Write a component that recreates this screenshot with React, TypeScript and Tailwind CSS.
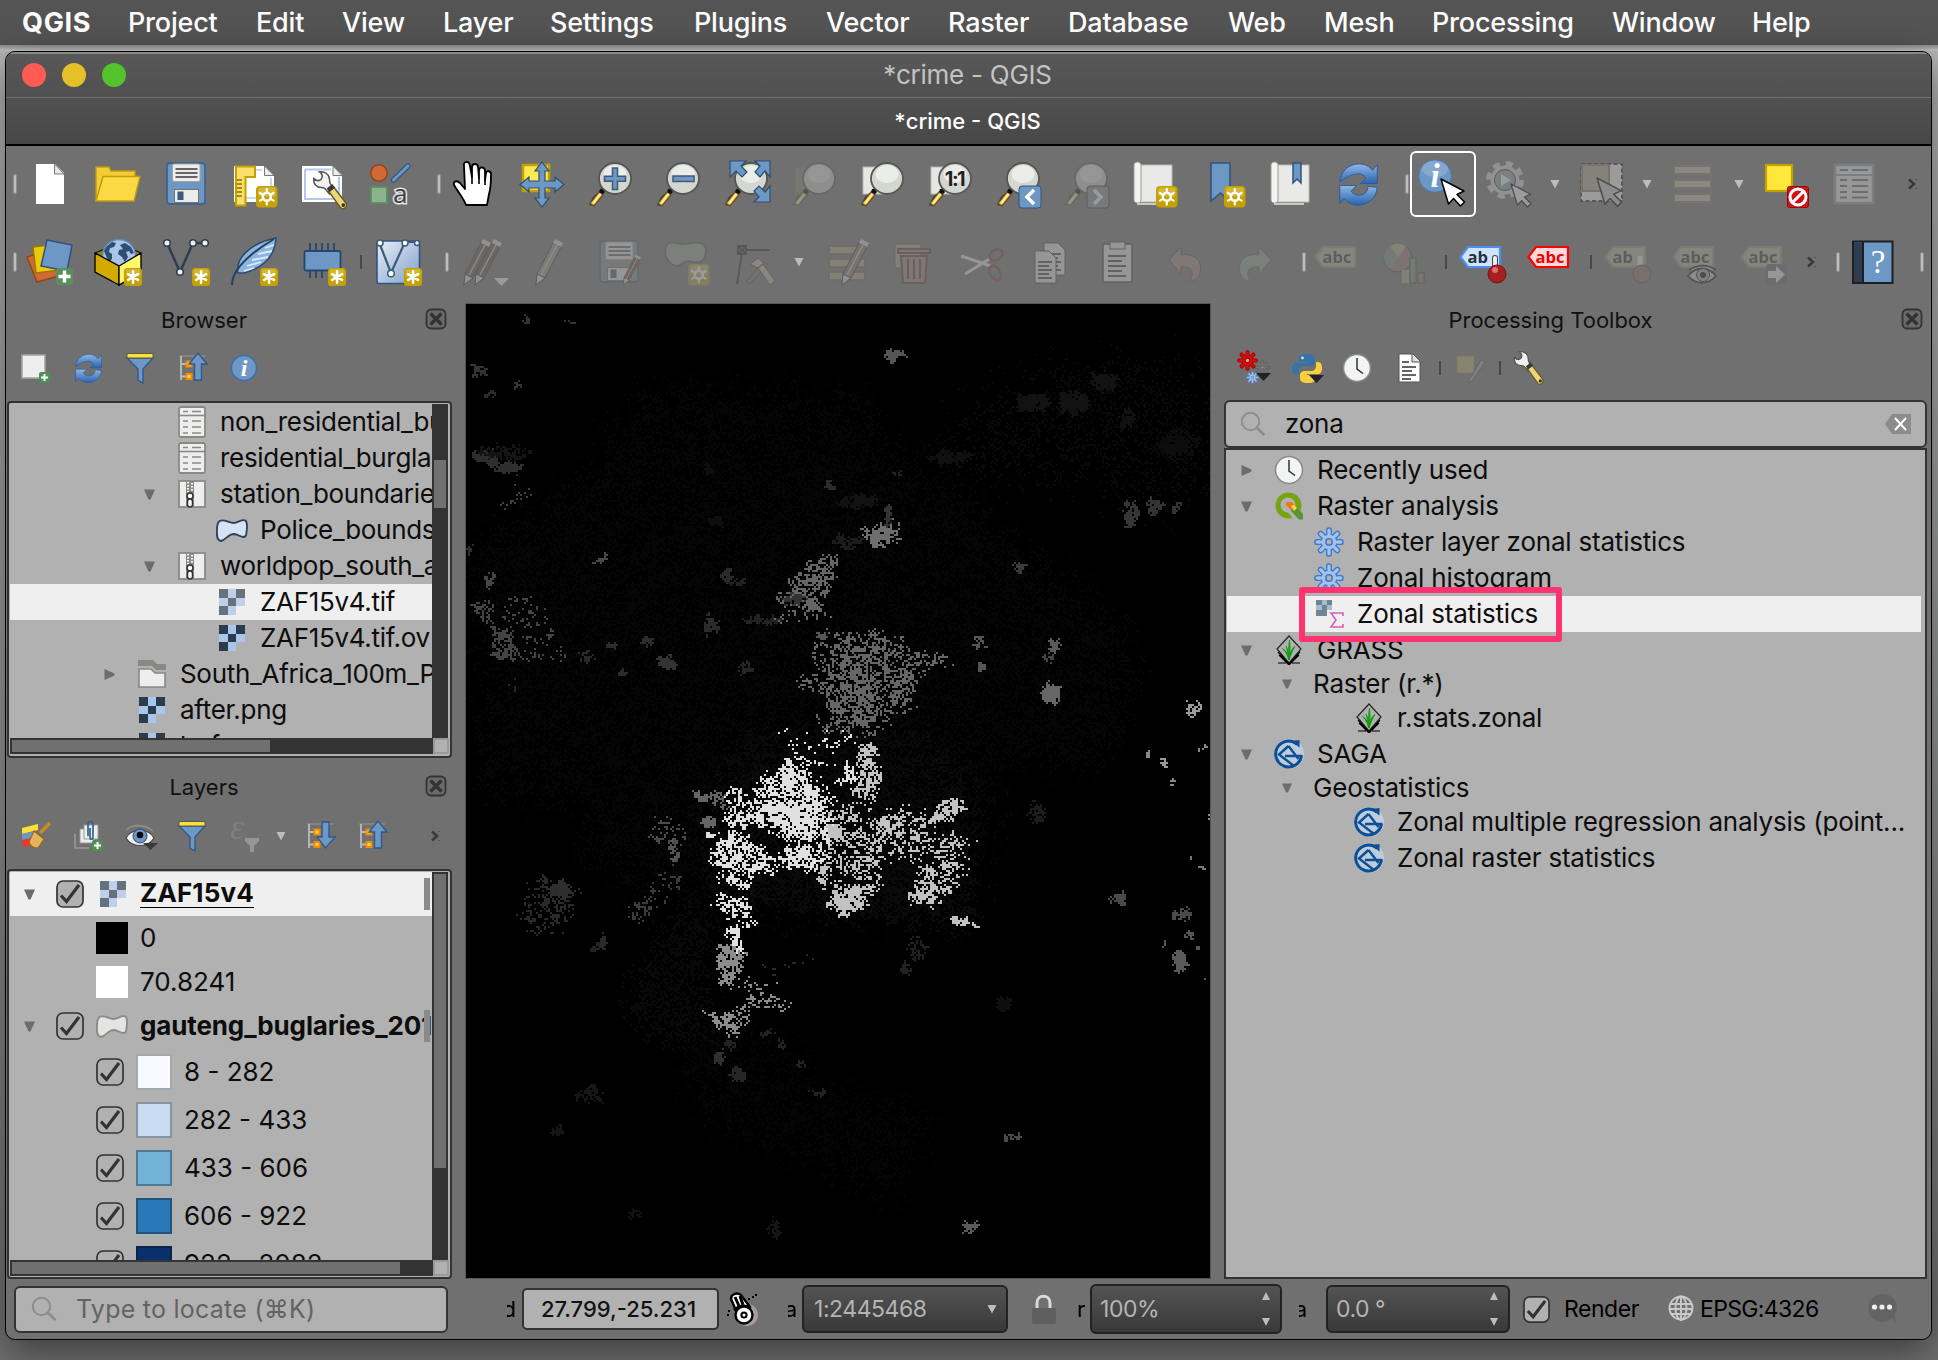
import React from "react";

/* ------------------------------------------------------------------ */
/* Map canvas                                                          */
/* ------------------------------------------------------------------ */

type Pt = [number, number];
type Region = { shade: string; density: number; pts: Pt[]; jitter?: number };

const hash = (x: number, y: number, s: number) => {
  let h = (Math.imul(x, 374761393) + Math.imul(y, 668265263) + Math.imul(s, 1274126177)) | 0;
  h = Math.imul(h ^ (h >>> 13), 1274126177);
  h = Math.imul(h ^ (h >>> 15), 2246822519);
  h = h ^ (h >>> 16);
  return (h >>> 0) / 4294967296;
};

const smooth = (x: number, y: number, sx: number, sy: number, s: number) => {
  const gx = Math.floor(x / sx);
  const gy = Math.floor(y / sy);
  const fx = x / sx - gx;
  const fy = y / sy - gy;
  const top = hash(gx, gy, s) * (1 - fx) + hash(gx + 1, gy, s) * fx;
  const bot = hash(gx, gy + 1, s) * (1 - fx) + hash(gx + 1, gy + 1, s) * fx;
  return top * (1 - fy) + bot * fy;
};

const inside = (x: number, y: number, p: Pt[]) => {
  let r = false;
  for (let i = 0, j = p.length - 1; i < p.length; j = i++) {
    if (p[i][1] > y !== p[j][1] > y && x < ((p[j][0] - p[i][0]) * (y - p[i][1])) / (p[j][1] - p[i][1]) + p[i][0]) r = !r;
  }
  return r;
};

const near = (pts: Pt[]): Pt[] => pts.map(([x, y]) => [x / 3 + 214, y / 3 + 416]);
const far = (pts: Pt[]): Pt[] => pts.map(([x, y]) => [x / 2.063 - 6, y / 1.6 - 4]);

const fill = (r: Region, seed: number) => {
  const j = r.jitter ?? 9;
  const xs = r.pts.map((p) => p[0]);
  const ys = r.pts.map((p) => p[1]);
  const x0 = Math.floor((Math.min(...xs) - j) / 2);
  const x1 = Math.ceil((Math.max(...xs) + j) / 2);
  const y0 = Math.floor((Math.min(...ys) - j) / 2);
  const y1 = Math.ceil((Math.max(...ys) + j) / 2);
  let d = "";
  for (let y = y0; y <= y1; y++) {
    for (let x = x0; x <= x1; x++) {
      const jx = x * 2 + (smooth(x, y, 3, 3, 5) - 0.5) * j * 1.4 + (hash(x, y, 6) - 0.5) * j * 0.9;
      const jy = y * 2 + (smooth(x, y, 3, 3, 9) - 0.5) * j * 1.4 + (hash(x, y, 8) - 0.5) * j * 0.9;
      if (!inside(jx, jy, r.pts)) continue;
      const n = hash(x, y, seed) * 0.46 + smooth(x, y, 2.2, 1.1, seed + 3) * 0.34 + smooth(x, y, 5, 4, 77) * 0.2;
      if (n < 0.5 + (r.density - 0.5) * 0.58) d += `M${x * 2} ${y * 2}h2v2h-2z`;
    }
  }
  return d;
};

const FAINT: Region[] = [
  { shade: "#050505", density: 0.5, jitter: 30, pts: far([[370, 145], [850, 160], [860, 230], [1050, 320], [1380, 540], [1380, 660], [1330, 740], [1110, 740], [1060, 1000], [500, 980], [270, 900], [270, 800], [40, 780], [50, 620], [20, 400], [270, 280]]) },
  { shade: "#080808", density: 0.36, jitter: 50, pts: far([[970, 240], [1140, 150], [1360, 100], [1480, 110], [1530, 230], [1540, 320], [1340, 280], [1160, 260], [1020, 260]]) },
  { shade: "#080808", density: 0.52, jitter: 20, pts: far([[350, 1095], [420, 1000], [500, 960], [520, 1180], [440, 1190], [350, 1160]]) },
  { shade: "#040404", density: 0.5, jitter: 30, pts: far([[440, 1190], [620, 1160], [740, 1260], [980, 1300], [880, 1430], [740, 1380], [530, 1320]]) },
  { shade: "#0a0a0a", density: 0.42, jitter: 20, pts: far([[600, 690], [900, 680], [1050, 760], [1060, 1000], [860, 990], [520, 960], [480, 860], [540, 740]]) },
];

const MAIN: Region[] = [
  { shade: "#e0e0e0", density: 0.52, pts: near([[320, 115], [385, 150], [440, 200], [460, 250], [450, 355], [370, 360], [290, 350], [240, 320], [180, 318], [115, 310], [145, 205], [180, 205], [200, 250], [250, 165]]) },
  { shade: "#e0e0e0", density: 0.6, pts: near([[300, 150], [350, 150], [410, 210], [410, 320], [440, 330], [440, 355], [340, 345], [290, 300], [180, 310], [180, 290], [240, 260], [270, 200]]) },
  { shade: "#e0e0e0", density: 0.6, pts: near([[150, 330], [240, 370], [285, 405], [270, 460], [200, 465], [95, 435], [90, 400], [120, 360]]) },
  { shade: "#e0e0e0", density: 0.56, pts: near([[300, 375], [440, 378], [440, 400], [400, 470], [330, 430], [290, 430]]) },
  { shade: "#e0e0e0", density: 0.66, pts: near([[120, 465], [200, 470], [205, 512], [180, 500], [125, 490]]) },
  { shade: "#e0e0e0", density: 0.46, pts: near([[95, 530], [200, 535], [215, 600], [190, 615], [140, 592]]) },
  { shade: "#e0e0e0", density: 0.76, pts: near([[138, 618], [175, 618], [190, 700], [150, 672]]), jitter: 5 },
  { shade: "#e0e0e0", density: 0.18, pts: near([[290, 40], [530, 30], [530, 80], [440, 150], [380, 150], [300, 120]]) },
  { shade: "#e0e0e0", density: 1, pts: near([[75, 335], [115, 340], [110, 350], [80, 348]]), jitter: 2 },
  { shade: "#8c8c8c", density: 0.72, pts: near([[108, 675], [150, 675], [200, 700], [185, 740], [140, 800], [110, 790]]), jitter: 6 },
  { shade: "#8c8c8c", density: 0.64, pts: near([[72, 868], [110, 880], [190, 855], [200, 900], [150, 945], [100, 910]]), jitter: 6 },
  { shade: "#8c8c8c", density: 0.26, pts: near([[180, 780], [260, 780], [330, 860], [300, 880], [190, 860]]) },
  { shade: "#c2c2c2", density: 0.64, pts: near([[535, 75], [580, 75], [590, 160], [602, 215], [570, 255], [525, 230], [540, 150]]), jitter: 7 },
  { shade: "#e0e0e0", density: 0.56, pts: near([[500, 108], [535, 120], [530, 190], [480, 190]]) },
  { shade: "#c2c2c2", density: 0.42, pts: near([[450, 260], [540, 265], [600, 330], [620, 400], [560, 480], [480, 440], [440, 420], [440, 330]]) },
  { shade: "#c2c2c2", density: 1, pts: near([[445, 310], [480, 310], [475, 345], [440, 345]]), jitter: 3 },
  { shade: "#c2c2c2", density: 0.56, pts: near([[600, 288], [690, 278], [690, 308], [640, 345], [600, 330]]) },
  { shade: "#c2c2c2", density: 0.68, pts: near([[748, 290], [795, 230], [852, 235], [850, 275], [760, 312]]), jitter: 6 },
  { shade: "#c2c2c2", density: 0.3, pts: near([[600, 255], [720, 260], [760, 320], [860, 350], [880, 410], [830, 490], [740, 480], [660, 410], [560, 400]]) },
  { shade: "#c2c2c2", density: 0.74, pts: near([[448, 490], [570, 500], [560, 550], [490, 592], [448, 560]]), jitter: 7 },
  { shade: "#c2c2c2", density: 0.7, pts: near([[438, 420], [450, 445], [430, 512], [402, 490]]), jitter: 5 },
  { shade: "#c2c2c2", density: 0.3, pts: near([[520, 440], [600, 430], [605, 490], [580, 520], [520, 500]]) },
  { shade: "#c2c2c2", density: 0.64, pts: near([[690, 510], [740, 440], [770, 440], [772, 550], [740, 564], [692, 540]]), jitter: 7 },
  { shade: "#c2c2c2", density: 0.34, pts: near([[770, 440], [830, 400], [850, 440], [800, 520], [770, 520]]) },
  { shade: "#646464", density: 0.62, pts: near([[28, 205], [130, 220], [135, 262], [40, 240]]), jitter: 5 },
  { shade: "#646464", density: 0.9, pts: near([[58, 290], [102, 293], [102, 320], [62, 315]]), jitter: 3 },
  { shade: "#6e6e6e", density: 0.7, pts: far([[828, 362], [870, 360], [895, 348], [902, 390], [860, 400], [830, 382]]), jitter: 6 },
  { shade: "#666666", density: 0.52, pts: far([[700, 425], [775, 402], [775, 440], [750, 480], [755, 505], [710, 490], [650, 478], [690, 450]]) },
  { shade: "#666666", density: 0.4, pts: far([[645, 520], [650, 500], [700, 485], [755, 500], [750, 512], [680, 505]]) },
  { shade: "#666666", density: 0.48, pts: far([[770, 535], [870, 532], [890, 560], [1000, 570], [1003, 585], [930, 590], [930, 650], [870, 655], [840, 680], [760, 685], [770, 640], [745, 612], [690, 622], [692, 605], [770, 585]]) },
  { shade: "#666666", density: 0.18, pts: far([[730, 530], [930, 535], [960, 610], [860, 690], [740, 690]]) },
  { shade: "#444444", density: 0.5, pts: far([[15, 485], [60, 480], [65, 515], [110, 530], [110, 575], [70, 570], [60, 520]]), jitter: 5 },
  { shade: "#444444", density: 0.26, pts: far([[90, 480], [160, 480], [210, 570], [110, 570]]) },
  { shade: "#2e2e2e", density: 0.85, pts: far([[22, 250], [60, 235], [80, 262], [130, 258], [120, 275], [80, 272]]), jitter: 4 },
  { shade: "#404040", density: 0.38, pts: far([[65, 325], [130, 298], [130, 315], [70, 335]]) },
  { shade: "#4a4a4a", density: 0.34, pts: far([[400, 830], [450, 825], [460, 850], [445, 900], [435, 870], [400, 865]]) },
  { shade: "#3c3c3c", density: 0.34, pts: far([[340, 1005], [370, 955], [450, 900], [460, 930], [400, 975]]) },
  { shade: "#2a2a2a", density: 0.38, pts: far([[120, 960], [160, 925], [235, 935], [235, 960], [210, 1010], [140, 1012]]) },
  { shade: "#2a2a2a", density: 0.26, pts: far([[620, 1070], [720, 1048], [720, 1060], [640, 1080]]) },
];

/* centre x, centre y, width, height, shade, density */
const SPOTS: [number, number, number, number, string, number][] = [
  [888, 88, 30, 18, "#555555", 1], [908, 87, 28, 8, "#555555", 1.1], [132, 32, 12, 10, "#333333", 0.6], [224, 37, 10, 5, "#333333", 0.8], [36, 113, 26, 20, "#333333", 0.45],
  [120, 131, 8, 10, "#333333", 0.8], [60, 151, 20, 8, "#2c2c2c", 0.85], [288, 412, 28, 12, "#484848", 0.85], [58, 450, 14, 28, "#444444", 0.7],
  [550, 440, 20, 24, "#2a2a2a", 0.85], [570, 450, 34, 8, "#222222", 0.7], [515, 518, 36, 26, "#2c2c2c", 0.75], [424, 578, 28, 28, "#333333", 0.9],
  [313, 548, 16, 12, "#2c2c2c", 0.8], [382, 546, 20, 10, "#2c2c2c", 0.8], [336, 596, 18, 10, "#2c2c2c", 0.8], [762, 297, 24, 14, "#2c2c2c", 0.9],
  [880, 340, 18, 40, "#333333", 0.6], [690, 478, 50, 14, "#333333", 0.7], [620, 510, 70, 12, "#222222", 0.8], [1153, 424, 24, 18, "#3a3a3a", 0.95],
  [1383, 340, 26, 44, "#363636", 0.75], [1430, 330, 30, 20, "#333333", 0.6], [1476, 332, 14, 18, "#333333", 0.8], [1068, 548, 26, 26, "#555555", 0.5],
  [1073, 587, 16, 12, "#555555", 0.85], [1226, 552, 24, 26, "#5a5a5a", 0.8], [1220, 628, 38, 28, "#666666", 0.85], [1510, 655, 32, 26, "#9a9a9a", 0.5],
  [1450, 740, 12, 14, "#9a9a9a", 1], [1467, 770, 18, 5, "#888888", 0.9], [1413, 727, 5, 7, "#888888", 1], [1532, 712, 5, 5, "#888888", 1],
  [1545, 825, 6, 8, "#888888", 1], [1510, 890, 6, 5, "#777777", 1], [1523, 904, 8, 5, "#777777", 1], [1360, 957, 30, 22, "#4a4a4a", 0.7],
  [1490, 983, 38, 14, "#4a4a4a", 0.7], [1506, 1014, 16, 11, "#555555", 1], [1483, 1058, 26, 34, "#5a5a5a", 0.85], [1455, 1029, 5, 5, "#555555", 1],
  [1520, 1038, 12, 5, "#555555", 0.8], [1536, 1083, 6, 3, "#555555", 1], [1030, 990, 30, 12, "#c2c2c2", 1.2], [1058, 998, 12, 8, "#c2c2c2", 1.2],
  [1126, 1341, 14, 9, "#4a4a4a", 1], [1141, 1336, 12, 8, "#4a4a4a", 1], [1047, 1484, 14, 16, "#5a5a5a", 1.1], [1058, 1476, 16, 12, "#5a5a5a", 1.1],
  [205, 942, 50, 28, "#2e2e2e", 0.7], [290, 1024, 16, 20, "#2a2a2a", 0.85],
  [276, 1035, 20, 10, "#222222", 0.7], [535, 1212, 28, 22, "#303030", 0.95], [554, 1190, 18, 12, "#222222", 0.9], [570, 1238, 34, 16, "#262626", 0.8],
  [628, 1172, 26, 14, "#222222", 0.5], [660, 1190, 16, 6, "#222222", 0.8], [265, 1272, 56, 26, "#161616", 0.6], [740, 1266, 26, 8, "#222222", 0.7],
  [702, 1224, 16, 5, "#222222", 0.8], [202, 1327, 24, 12, "#161616", 0.6], [650, 1486, 18, 28, "#141414", 0.9], [356, 1461, 20, 12, "#111111", 0.6],
  [1188, 818, 28, 36, "#1c1c1c", 0.5], [940, 1036, 40, 36, "#202020", 0.3], [915, 1066, 16, 18, "#222222", 0.6], [1120, 1126, 36, 20, "#0e0e0e", 0.8],
  [1180, 165, 70, 28, "#121212", 0.8], [1268, 162, 60, 40, "#121212", 0.8], [1328, 128, 54, 28, "#121212", 0.7], [1376, 188, 34, 30, "#111111", 0.7],
  [1010, 250, 90, 18, "#101010", 0.8], [1480, 230, 80, 50, "#0d0d0d", 0.5], [820, 320, 80, 22, "#121212", 0.8], [525, 352, 26, 18, "#0e0e0e", 0.8],
  [510, 270, 20, 14, "#0e0e0e", 0.8], [90, 242, 120, 20, "#141414", 0.4], [15, 400, 8, 18, "#2e2e2e", 1], [102, 612, 26, 14, "#262626", 0.4],
  [588, 588, 30, 14, "#262626", 0.5], [800, 385, 60, 18, "#1c1c1c", 0.6], [440, 880, 14, 40, "#555555", 0.5], [744, 540, 26, 18, "#555555", 0.6],
  [900, 278, 24, 8, "#222222", 0.5], [262, 570, 30, 14, "#2a2a2a", 0.3], [1210, 570, 14, 18, "#444444", 0.4],
];

const ellipse = (cx: number, cy: number, w: number, h: number): Pt[] =>
  Array.from({ length: 12 }, (_, i) => [cx + (Math.cos((i * Math.PI) / 6) * w) / 2, cy + (Math.sin((i * Math.PI) / 6) * h) / 2] as Pt);

const PATHS = [
  ...FAINT,
  ...MAIN,
  ...SPOTS.map(([x, y, w, h, shade, density]) => ({ shade, density: density + 0.15, jitter: 5, pts: far(ellipse(x, y, w + 3, h + 2)) })),
].map((r, i) => ({ shade: r.shade, d: fill(r, i + 11) }));

const MapCanvas = () => (
  <svg width="744" height="974" viewBox="0 0 744 974" shapeRendering="crispEdges" className="block bg-black">
    {PATHS.map((p, i) => (
      <path key={i} d={p.d} fill={p.shade} />
    ))}
  </svg>
);

/* ------------------------------------------------------------------ */
/* Toolbar icons (48 × 48 box)                                         */
/* ------------------------------------------------------------------ */

type Kids = { children?: React.ReactNode };

const I = ({ children, dim = false }: Kids & { dim?: boolean }) => (
  <svg width="48" height="48" viewBox="0 0 48 48" className={dim ? "shrink-0 opacity-[0.3] saturate-[0.6] overflow-visible" : "shrink-0 overflow-visible"}>
    {children}
  </svg>
);

const Star = ({ x = 26, y = 26, gear = false }: { x?: number; y?: number; gear?: boolean }) => (
  <g transform={`translate(${x},${y})`}>
    <rect width="21.5" height="21.5" rx="4" fill="#c4a000" />
    <rect x="2" y="1.5" width="17.5" height="9" rx="2" fill="#d9c04d" opacity=".7" />
    {gear && <circle cx="10.8" cy="10.8" r="4" fill="none" stroke="#fff" strokeWidth="2.4" />}
    <g stroke="#fff" strokeWidth={gear ? 2.2 : 3} strokeLinecap="round">
      {gear ? <path d="M10.8 3v4M10.8 14.6v4M4 7l3.4 2M14.2 12.6l3.4 2M4 14.6l3.4-2M14.2 9l3.4-2" /> : <path d="M10.8 4v13.6M4.9 7.4l11.8 6.8M4.9 14.2l11.8-6.8" />}
    </g>
  </g>
);

const Lens = ({ kind = "" }: { kind?: string }) => (
  <>
    {(kind === "sel" || kind === "layer" || kind === "one") && (
      <rect x="5" y="7" width="26" height="27" fill={kind === "sel" ? "#8d8467" : "#e6e6e4"} stroke={kind === "sel" ? "#7b7256" : "#b5b5b0"} />
    )}
    <path d="M3 45l4-8 9-8 3 3-5 6-7 8z" fill="#2f3436" />
    <path d="M4 43.5L13 32l4 3-9 11z" fill="#fcaf17" stroke="#5d5030" strokeWidth="1.2" />
    <path d="M6 43l8-10 1.5 1L8 44z" fill="#fff2b0" />
    <circle cx="16" cy="31" r="2.6" fill="#111" />
    <ellipse cx="29" cy="18.5" rx="16" ry="15.5" fill="#d3d7cf" stroke="#555753" strokeWidth="1.8" />
    <ellipse cx="29" cy="14" rx="11.5" ry="9" fill="#fff" opacity=".55" />
    {kind === "in" && <path d="M26.5 8h5v8.2h8v5h-8v8.3h-5v-8.3h-8v-5h8z" fill="#6d97c4" stroke="#415a75" strokeWidth="1.5" />}
    {kind === "out" && <rect x="19" y="16" width="21" height="5.5" fill="#6d97c4" stroke="#415a75" strokeWidth="1.5" />}
    {kind === "one" && (
      <text x="28.5" y="25.5" textAnchor="middle" fontFamily="Inter" fontWeight="700" fontSize="20" fill="#222" letterSpacing="-1.5">
        1:1
      </text>
    )}
  </>
);

const FullArrows = () => (
  <g fill="#6d97c4" stroke="#2e4e72" strokeWidth="1.2">
    <path d="M8 1h16l-5 5 6 6-5 5-6-6-6 6z" />
    <path d="M48 1H33l5 5-5 6 5 5 5-6 5 6z" />
    <path d="M48 42H32l5-5-5-6 5-5 6 6 5-6z" />
  </g>
);

const Cursor = ({ x, y, s = 1, fill = "#fff", stroke = "#000" }: { x: number; y: number; s?: number; fill?: string; stroke?: string }) => (
  <path transform={`translate(${x},${y}) scale(${s})`} d="M0 0l7.5 25 5-5.5 7 7.5 4-4-7.500-7.500 7-3.500z" fill={fill} stroke={stroke} strokeWidth="1.5" strokeLinejoin="round" />
);

const Refresh = ({ size }: { size: number }) => (
  <svg width={size} height={size} viewBox="0 0 48 48" className="shrink-0">
    <defs>
      <linearGradient id="rf" x1="0" y1="0" x2="0" y2="1">
        <stop offset="0" stopColor="#8fb8e6" />
        <stop offset="1" stopColor="#2a62ad" />
      </linearGradient>
    </defs>
    <path d="M4 21C5 9 14 2 25 2c6 0 11 3 14 7l5-6v20H26l6-6c-3-4-7-5-11-4-5 0-9 4-17 8z" fill="url(#rf)" stroke="#2a5c9c" strokeWidth="1" />
    <path d="M44 27c-1 12-10 19-21 19-6 0-11-3-14-7l-5 5V25h18l-6 6c3 4 7 5 11 4 6-1 7-6 7-9z" fill="url(#rf)" stroke="#2a5c9c" strokeWidth="1" />
  </svg>
);

const Roll = () => (
  <>
    <path d="M8 5h34v37H8z" fill="#e9e9e7" stroke="#b8b8b4" />
    <path d="M4 5c0-4 7-4 7 0v35c0 4-7 4-7 0z" fill="#f4f4f2" stroke="#9a9a96" />
    <path d="M7 44h30" stroke="#c9c9c5" strokeWidth="2" />
  </>
);

const Wrench = () => (
  <>
    <path d="M2 8c3 3 6 3 8 1 2-3 1-6-2-8 6-1 11 3 11 8 0 2 0 3 1 5l5 6-6 5-5-6c-1-1-2-1-4-1C5 18 1 14 2 8z" fill="#f2f2f0" stroke="#555" strokeWidth="1.6" />
    <path d="M18 22l6-4 13 17c2 4-3 8-6 5z" fill="#ecd57a" stroke="#6b5a20" strokeWidth="1.6" />
    <path d="M16 19l6-5 3 4-6 5z" fill="#3a3a3a" />
    <circle cx="34" cy="37" r="2" fill="#333" />
  </>
);

const Tag = ({ text, fill, stroke, color }: { text: string; fill: string; stroke: string; color: string }) => (
  <>
    <path d="M1.5 19L9 9h32v20H9z" fill={fill} stroke={stroke} strokeWidth="2.2" />
    <text x="8.5" y="24.5" fontFamily="Open Sans" fontWeight="700" fontSize="16.5" fill={color}>
      {text}
    </text>
  </>
);

const Pencil = ({ x = 0, fill = "#8c7a6c" }: { x?: number; fill?: string }) => (
  <g transform={`translate(${x},0)`}>
    <path d="M11 36L27 5l8 4-16 31-9 7z" fill={fill} stroke="#4c4038" strokeWidth="1.2" />
    <path d="M27 5l2-4 8 4-2 4z" fill="#ddd" />
    <path d="M11 36l8 4-9 7z" fill="#e5e0d5" stroke="#333" />
    <path d="M15 37L31 7" stroke="#cfc6b8" strokeWidth="1.5" />
  </g>
);

const Flop = ({ body = "#6d97c4" }: { body?: string }) => (
  <>
    <rect x="5" y="3" width="38" height="41" rx="3" fill={body} stroke="#3d6493" strokeWidth="1.8" />
    <rect x="10.5" y="4" width="27.5" height="17.5" rx="1.5" fill="#ececec" stroke="#aaa59a" />
    <path d="M13.5 9h22M13.5 13h22M13.5 17h22" stroke="#666" strokeWidth="1.8" />
    <rect x="12.5" y="29.5" width="24" height="13" fill="#ececec" stroke="#77736a" />
    <rect x="15.5" y="31.5" width="6" height="8.5" fill="#3a5a80" />
  </>
);

const Sheet = ({ dx = 0, dy = 0 }: { dx?: number; dy?: number }) => (
  <g transform={`translate(${dx},${dy})`}>
    <path d="M8 6h14l7 7v25H8z" fill="#eee" stroke="#444" />
    <path d="M11 17h14M11 21h11M11 25h14M11 29h11M11 33h14" stroke="#444" strokeWidth="2" />
  </g>
);

/* cell whose content is centred on its right edge */
const Cell = ({ w, children }: Kids & { w: string }) => (
  <div className={`flex shrink-0 justify-end ${w}`}>
    <div className="flex w-0 items-center justify-center">{children}</div>
  </div>
);

const Handle = () => <div className="h-[20px] w-[4px] shrink-0 rounded-full border border-[#8e8e8e] bg-[#bdbdbd]" />;
const Sep = () => <div className="h-[14px] w-[2px] shrink-0 bg-[#484848]" />;
const Drop = () => (
  <svg width="10" height="10" viewBox="0 0 10 10" className="shrink-0">
    <path d="M.5 1h9L5 9.5z" fill="#bdbdbd" />
  </svg>
);
const Chev = () => (
  <svg width="9" height="12" viewBox="0 0 9 12" className="shrink-0">
    <path d="M1 1.5L6 6 1 10.5" fill="none" stroke="#3a3a3a" strokeWidth="2.6" />
    <path d="M7 1.5h2M7 10.5h2" stroke="#555" />
  </svg>
);

const Row1 = () => (
  <div className="flex h-[78px] items-center pb-[2px]">
    <Cell w="w-[9px]"><Handle /></Cell>
    <Cell w="w-[35px]">
      <I>
        <path d="M10 4h19l9 9v31H10z" fill="#fff" />
        <path d="M28.5 4v10H38z" fill="#e8e8e8" stroke="#777" />
      </I>
    </Cell>
    <Cell w="w-[68px]">
      <I>
        <path d="M2 41V7h13l2 4h24v8z" fill="#f3cc36" stroke="#c09b10" strokeWidth="1.4" />
        <path d="M2 41L9 16.5h37L40 41z" fill="#fcd944" stroke="#c09b10" strokeWidth="1.4" />
      </I>
    </Cell>
    <Cell w="w-[68px]"><I><Flop /></I></Cell>
    <Cell w="w-[68px]">
      <I>
        <path d="M4 6h30l10 10v26H4z" fill="#fff" />
        <path d="M8 10h24M41 18v20H8" fill="none" stroke="#bccbec" strokeWidth="1.6" />
        <path d="M34.5 6v9.5H44z" fill="#eee" stroke="#777" />
        <path d="M6 6.5h19V17h-9.500v28.500H6z" fill="#fbdf6b" stroke="#c4a000" strokeWidth="2" />
        <path d="M7 20h5M7 24h5M7 28h5M7 32h5M7 36h5" stroke="#8a7000" strokeWidth="1.6" />
        <Star gear />
      </I>
    </Cell>
    <Cell w="w-[69px]">
      <I>
        <path d="M3 6h31l9 9v27H3z" fill="#fff" />
        <path d="M6 9.5h26M40 17v22H6V9.5" fill="none" stroke="#b6c6ec" strokeWidth="2" />
        <path d="M34 6v9.5h9z" fill="#eee" stroke="#777" />
        <g transform="translate(13,11) scale(.92)"><Wrench /></g>
      </I>
    </Cell>
    <Cell w="w-[68px]">
      <I>
        <circle cx="12" cy="13" r="8.3" fill="#cf6a36" stroke="#9a4314" strokeWidth="1.5" />
        <path d="M26.5 20L41 6" stroke="#37597f" strokeWidth="5.5" strokeLinecap="round" />
        <path d="M26.5 20L41 6" stroke="#6d97c4" strokeWidth="3" strokeLinecap="round" />
        <rect x="4" y="27" width="16" height="16" fill="#8ab28c" stroke="#5b8f5d" strokeWidth="1.8" />
        <text x="26" y="43" fontFamily="Noto Sans" fontSize="26" fill="#444" stroke="#e4e4e4" strokeWidth="3" paintOrder="stroke">a</text>
      </I>
    </Cell>
    <Cell w="w-[48px]"><Handle /></Cell>
    <Cell w="w-[37px]">
      <I>
        <path
          d="M14 45c-3-8-8-13-12-20-1-4 3-5 6-2l5 6L12 6c-1-5 5-6 6 0l2 11c0-3 0-9 0-10 0-4 6-4 6 0l1 11V10c1-4 6-3 6 1v9l1-7c1-3 5-2 5 1 0 9 0 14-2 20l-2 11z"
          fill="#fff"
          stroke="#000"
          strokeWidth="1.8"
          strokeLinejoin="round"
        />
        <path d="M20 17v7M27 18v6M33 20v5" stroke="#000" strokeWidth="1.6" />
      </I>
    </Cell>
    <Cell w="w-[66px]">
      <I>
        <rect x="5" y="5" width="26" height="26" fill="#fce94f" stroke="#c4a000" strokeWidth="2.5" />
        <path d="M24 2l7 9h-4v10h10v-4l9 7.5-9 7.500v-4H27v10h4l-7 9-7-9h4V28H11v4l-9-7.500L11 17v4h10V11h-4z" fill="#6d97c4" stroke="#2e4e72" strokeWidth="1.2" />
      </I>
    </Cell>
    <Cell w="w-[68px]"><I><Lens kind="in" /></I></Cell>
    <Cell w="w-[68px]"><I><Lens kind="out" /></I></Cell>
    <Cell w="w-[68px]"><I><Lens /><FullArrows /></I></Cell>
    <Cell w="w-[68px]"><I dim><Lens kind="sel" /></I></Cell>
    <Cell w="w-[68px]"><I><Lens kind="layer" /></I></Cell>
    <Cell w="w-[68px]"><I><Lens kind="one" /></I></Cell>
    <Cell w="w-[68px]">
      <I>
        <Lens />
        <rect x="25" y="26" width="22" height="22" rx="3" fill="#6d97c4" stroke="#31557e" />
        <path d="M40 30l-7 7 7 7" fill="none" stroke="#fff" strokeWidth="3.5" />
      </I>
    </Cell>
    <Cell w="w-[68px]">
      <I dim>
        <Lens />
        <rect x="25" y="26" width="22" height="22" rx="3" fill="#8a9099" stroke="#333" />
        <path d="M32 30l7 7-7 7" fill="none" stroke="#fff" strokeWidth="3.5" />
      </I>
    </Cell>
    <Cell w="w-[68px]"><I><Roll /><Star gear /></I></Cell>
    <Cell w="w-[68px]">
      <I>
        <path d="M13 3h19v38l-9.500-8L13 41z" fill="#6d97c4" stroke="#31557e" strokeWidth="1.6" />
        <Star gear />
      </I>
    </Cell>
    <Cell w="w-[69px]">
      <I>
        <Roll />
        <path d="M26 3h8v20l-4-4-4 4z" fill="#6d97c4" stroke="#31557e" strokeWidth="1.5" />
      </I>
    </Cell>
    <Cell w="w-[67px]"><Refresh size={45} /></Cell>
    <Cell w="w-[49px]"><Handle /></Cell>
    <Cell w="w-[36px]">
      <div className="flex h-[66px] w-[66px] shrink-0 items-center justify-center rounded-[6px] border-2 border-white">
        <I>
          <circle cx="16" cy="16" r="16.3" fill="#6d97c4" stroke="#4a7ab0" />
          <ellipse cx="16" cy="9" rx="13" ry="8" fill="#a9c4e2" opacity=".4" />
          <text x="16" y="27" textAnchor="middle" fontFamily="Liberation Serif" fontStyle="italic" fontWeight="700" fontSize="33" fill="#fff">i</text>
          <Cursor x={22} y={19} />
        </I>
      </div>
    </Cell>
    <Cell w="w-[67px]">
      <I dim>
        <circle cx="19" cy="20" r="16.5" fill="none" stroke="#ddd" strokeWidth="5" strokeDasharray="7 6" />
        <circle cx="19" cy="20" r="12.5" fill="#8ca3b5" stroke="#ddd" strokeWidth="4" />
        <circle cx="19" cy="20" r="10.5" fill="#8ca3b5" stroke="#333" />
        <path d="M15 14l10 6-10 6z" fill="#fff" />
        <Cursor x={25} y={24} s={0.85} />
      </I>
    </Cell>
    <Cell w="w-[45px]"><Drop /></Cell>
    <Cell w="w-[46px]">
      <I dim>
        <rect x="4" y="4" width="41" height="37" fill="#fff" stroke="#222" strokeWidth="2" strokeDasharray="4 2.5" />
        <rect x="5" y="5" width="27" height="26" fill="#b8ad82" stroke="#8b8054" strokeWidth="2" />
        <Cursor x={20} y={18} s={1.05} fill="#ccc" />
      </I>
    </Cell>
    <Cell w="w-[46px]"><Drop /></Cell>
    <Cell w="w-[46px]">
      <I dim>
        <g fill="#c8c0a0" stroke="#8b8054" strokeWidth="2">
          <rect x="5" y="6" width="37" height="8" />
          <rect x="5" y="20" width="37" height="8" />
          <rect x="5" y="34" width="37" height="8" />
        </g>
      </I>
    </Cell>
    <Cell w="w-[46px]"><Drop /></Cell>
    <Cell w="w-[48px]">
      <I>
        <rect x="3" y="5" width="26" height="26" fill="#ffe83a" stroke="#c4a000" strokeWidth="2.2" />
        <rect x="24.5" y="26.5" width="21" height="21" rx="2" fill="#cc1414" stroke="#a40000" />
        <circle cx="35" cy="37" r="8" fill="#cc1414" stroke="#fff" strokeWidth="3" />
        <path d="M30 42l10-10" stroke="#fff" strokeWidth="3" />
      </I>
    </Cell>
    <Cell w="w-[67px]">
      <I dim>
        <rect x="5" y="5" width="38" height="38" fill="#f2f2f2" stroke="#93a5b5" strokeWidth="2.5" />
        <path d="M5 15h38" stroke="#93a5b5" strokeWidth="2" />
        <path d="M10 10h8M22 10h16M10 20h7M22 20h16M10 26h7M22 26h16M10 32h7M22 32h16M10 37.5h7M22 37.5h16" stroke="#5c6873" strokeWidth="2" />
      </I>
    </Cell>
    <Cell w="w-[58px]"><Chev /></Cell>
  </div>
);

const Row2 = () => (
  <div className="flex h-[78px] items-center pb-[3px]">
    <Cell w="w-[9px]"><Handle /></Cell>
    <Cell w="w-[35px]">
      <I>
        <path d="M1 19l18-6 14 25-22 6z" fill="#cf6a36" stroke="#9a4314" strokeWidth="1.5" />
        <path d="M7 9l24-3 3 26-24 3z" fill="#edc90d" stroke="#967b00" strokeWidth="1.5" />
        <path d="M21 2l25 5-5 26-26-5z" fill="#6d97c4" stroke="#2d5180" strokeWidth="1.5" />
        <rect x="30" y="30" width="17" height="17" rx="3" fill="#5a8f5c" />
        <path d="M38.5 32.5v12M32.5 38.5h12" stroke="#fff" strokeWidth="3.5" />
      </I>
    </Cell>
    <Cell w="w-[68px]">
      <I>
        <path d="M1 15l24 13 22-13-22-10z" fill="#9b7b00" stroke="#000" />
        <circle cx="25" cy="18" r="16.5" fill="#a9c5e8" stroke="#5f88bb" strokeWidth="1.5" />
        <path d="M12 9l6-5 4 1-2 4-4 1-1 4 3 2v5l-3 3-3-6-2-5zM26 7l5-2 6 4 3 6-3 1-2-3-3 1 2 5-3 5-3-5-4-3 1-4 4-1z" fill="#2e4e72" />
        <path d="M1 15l24 13v19L1 34z" fill="#d4aa00" stroke="#000" strokeWidth="1.3" />
        <path d="M25 28l22-13v19L25 47z" fill="#fff86a" stroke="#000" strokeWidth="1.3" />
        <g transform="translate(30,30) scale(.84)"><Star x={0} y={0} /></g>
      </I>
    </Cell>
    <Cell w="w-[68px]">
      <I>
        <path d="M5 5l13 29L31 5h12" fill="none" stroke="#2c3e50" strokeWidth="2.5" />
        <g fill="#eee" stroke="#2c3e50" strokeWidth="1.6">
          <circle cx="5" cy="5" r="3.3" /><circle cx="31" cy="5" r="3.3" /><circle cx="43" cy="5" r="3.3" /><circle cx="18" cy="34" r="3.3" />
        </g>
        <g transform="translate(30,30) scale(.84)"><Star x={0} y={0} /></g>
      </I>
    </Cell>
    <Cell w="w-[68px]">
      <I>
        <path d="M8 35c-3-14 12-30 38-35-1 16-10 29-32 35z" fill="#8bb4e0" stroke="#2c4a6e" strokeWidth="1.5" />
        <path d="M2 47c0-12 12-28 42-46" fill="none" stroke="#22405f" strokeWidth="2" />
        <path d="M14 33l10-3M17 28l14-4M22 22l16-3M28 16l14-3M35 10l9-3" stroke="#dcebfa" strokeWidth="1.8" />
        <g transform="translate(30,30) scale(.84)"><Star x={0} y={0} /></g>
      </I>
    </Cell>
    <Cell w="w-[68px]">
      <I>
        <path d="M12 5v8M18 5v8M24 5v8M30 5v8M36 5v8M12 32v8M18 32v8M24 32v8" stroke="#25466f" strokeWidth="1.8" />
        <rect x="6.5" y="13" width="36" height="19.5" rx="1.5" fill="#6d97c4" stroke="#25466f" strokeWidth="1.8" />
        <g transform="translate(30,30) scale(.84)"><Star x={0} y={0} /></g>
      </I>
    </Cell>
    <Cell w="w-[39px]"><Sep /></Cell>
    <Cell w="w-[37px]">
      <I>
        <defs>
          <linearGradient id="vl" x1="0" y1="0" x2="1" y2="1"><stop offset="0" stopColor="#e8eef7" /><stop offset="1" stopColor="#7f9fca" /></linearGradient>
        </defs>
        <rect x="3" y="3" width="42.5" height="42.5" rx="2" fill="url(#vl)" stroke="#31557e" strokeWidth="1.6" />
        <path d="M5 4l12 31L31 4h13" fill="none" stroke="#3c5a7a" strokeWidth="2.2" />
        <g fill="#fff" stroke="#3c5a7a" strokeWidth="1.5"><circle cx="6" cy="5" r="3" /><circle cx="31" cy="5" r="3" /><circle cx="43" cy="5" r="2.5" /><circle cx="17" cy="35.5" r="3.3" /></g>
        <g transform="translate(30,30) scale(.84)"><Star x={0} y={0} /></g>
      </I>
    </Cell>
    <Cell w="w-[49px]"><Handle /></Cell>
    <Cell w="w-[37px]">
      <I dim>
        <Pencil x={-6} fill="#6a5140" /><Pencil x={5} fill="#6a5140" />
        <path d="M34 40h15l-7.500 8z" fill="#fff" />
      </I>
    </Cell>
    <Cell w="w-[66px]"><I dim><Pencil x={0} fill="#a19878" /></I></Cell>
    <Cell w="w-[69px]"><I dim><Flop body="#8b9096" /><g transform="translate(22,16) scale(.65)"><Pencil fill="#8a4a2a" /></g></I></Cell>
    <Cell w="w-[67px]">
      <I dim>
        <path d="M4 8c6-8 12 0 20-2s20-3 20 6-4 14-12 12-9-1-14 3S0 22 4 8z" fill="#93a593" stroke="#4f5f4f" strokeWidth="1.8" />
        <Star gear />
      </I>
    </Cell>
    <Cell w="w-[70px]">
      <I dim>
        <rect x="6" y="8" width="8" height="8" fill="none" stroke="#222" strokeWidth="2" />
        <path d="M14 12h24M7 9l6 6M13 9l-6 6M10 16L5 46" stroke="#222" strokeWidth="1.8" fill="none" />
        <path d="M14 44l17-20 5 2-18 20z" fill="#777" stroke="#444" />
        <path d="M18 26l8-6 6 5-6 5zM26 30l5-4 12 17-5 4z" fill="#c9bd93" stroke="#444" />
      </I>
    </Cell>
    <Cell w="w-[43px]"><Drop /></Cell>
    <Cell w="w-[49px]">
      <I dim>
        <g fill="#b8a66a" stroke="#6f6333" strokeWidth="1.5"><rect x="5" y="8" width="36" height="8" /><rect x="5" y="21" width="36" height="8" /><rect x="5" y="34" width="36" height="8" /></g>
        <Pencil x={8} />
      </I>
    </Cell>
    <Cell w="w-[66px]">
      <I dim>
        <rect x="5" y="6" width="26" height="24" fill="#b8a66a" stroke="#6f6333" />
        <path d="M8 11h32v4H8zM11 18h26l-2 27H13z" fill="#b98080" stroke="#6d3434" strokeWidth="2" />
        <path d="M18 21v20M24 21v20M30 21v20" stroke="#6d3434" strokeWidth="2" />
      </I>
    </Cell>
    <Cell w="w-[69px]">
      <I dim>
        <path d="M2 18l30 10M6 36l26-16" stroke="#eee" strokeWidth="3" />
        <ellipse cx="37" cy="17" rx="7" ry="5" transform="rotate(-35 37 17)" fill="none" stroke="#a33" strokeWidth="2.5" />
        <ellipse cx="36" cy="35" rx="5" ry="8" transform="rotate(-30 36 35)" fill="none" stroke="#a33" strokeWidth="2.5" />
      </I>
    </Cell>
    <Cell w="w-[68px]"><I dim><Sheet dx={9} dy={-1} /><Sheet dx={0} dy={7} /></I></Cell>
    <Cell w="w-[67px]">
      <I dim>
        <rect x="9" y="6" width="29" height="38" fill="#eee" stroke="#444" strokeWidth="1.6" />
        <rect x="16" y="4" width="15" height="7" fill="#eee" stroke="#444" />
        <path d="M14 18h18M14 23h14M14 28h18M14 33h14M14 38h18" stroke="#444" strokeWidth="2" />
      </I>
    </Cell>
    <Cell w="w-[68px]"><I dim><path d="M7 22L19 9v8c14-2 22 6 19 18-2 5-6 8-11 9 6-8 4-16-8-15v7z" fill="#b08a74" stroke="#6b4a38" /></I></Cell>
    <Cell w="w-[68px]"><I dim><path d="M41 22L29 9v8c-14-2-22 6-19 18 2 5 6 8 11 9-6-8-4-16 8-15v7z" fill="#93a898" stroke="#4b6a52" /></I></Cell>
    <Cell w="w-[50px]"><Handle /></Cell>
    <Cell w="w-[34px]"><I dim><Tag text="abc" fill="#b9b58c" stroke="#a09a68" color="#333" /></I></Cell>
    <Cell w="w-[68px]">
      <I dim>
        <circle cx="16" cy="20" r="14" fill="#a87272" stroke="#5a3a3a" />
        <path d="M16 20L8 8a14 14 0 0116 0z" fill="#b8b06a" />
        <path d="M16 20L8 8a14 14 0 000 23z" fill="#6f9a7f" />
        <path d="M20 32h7v13h-7z" fill="#b8a66a" /><path d="M28 20h6v25h-6z" fill="#6f9a85" stroke="#335a44" /><path d="M36 35h6v10h-6z" fill="#a87a7a" stroke="#6a3a3a" />
      </I>
    </Cell>
    <Cell w="w-[40px]"><Sep /></Cell>
    <Cell w="w-[37px]">
      <I>
        <Tag text="ab" fill="#cfe3fb" stroke="#4a90f0" color="#23323e" />
        <path d="M36 20v9" stroke="#444" strokeWidth="6" strokeLinecap="round" /><path d="M36 20v9" stroke="#eee" strokeWidth="4" strokeLinecap="round" />
        <circle cx="38" cy="36" r="9" fill="#a62020" stroke="#7a1010" /><circle cx="36" cy="32" r="3" fill="#e07070" />
      </I>
    </Cell>
    <Cell w="w-[68px]"><I><Tag text="abc" fill="#ffdcdc" stroke="#f00" color="#f00000" /></I></Cell>
    <Cell w="w-[40px]"><Sep /></Cell>
    <Cell w="w-[37px]">
      <I dim>
        <Tag text="ab" fill="#b9b58c" stroke="#a09a68" color="#333" />
        <path d="M36 20v9" stroke="#eee" strokeWidth="5" strokeLinecap="round" />
        <circle cx="38" cy="36" r="9" fill="#a66a6a" stroke="#6a3a3a" />
      </I>
    </Cell>
    <Cell w="w-[68px]">
      <I dim>
        <Tag text="abc" fill="#b9b58c" stroke="#a09a68" color="#333" />
        <path d="M16 38c8-10 20-10 28 0-8 9-20 9-28 0zM17 32c8-5 18-6 27 0" fill="#ccc" stroke="#111" strokeWidth="1.8" />
        <circle cx="31" cy="37" r="6.5" fill="#9ab" stroke="#111" /><circle cx="31" cy="37" r="3" fill="#000" />
      </I>
    </Cell>
    <Cell w="w-[68px]">
      <I dim>
        <Tag text="abc" fill="#b9b58c" stroke="#a09a68" color="#333" />
        <rect x="26" y="26" width="21" height="21" rx="3" fill="#5d6670" />
        <path d="M28 33h8v-5l9 8.5-9 8.500v-5h-8z" fill="#eee" />
      </I>
    </Cell>
    <Cell w="w-[47px]"><Chev /></Cell>
    <Cell w="w-[27px]"><Handle /></Cell>
    <Cell w="w-[35px]">
      <I>
        <rect x="4" y="3.5" width="39.5" height="41.5" fill="#6d97c4" stroke="#1d1f22" strokeWidth="2" />
        <rect x="5" y="4.5" width="8.5" height="39.5" fill="#2c3e50" />
        <path d="M14 4v40" stroke="#1d1f22" strokeWidth="2" />
        <text x="29" y="35" textAnchor="middle" fontFamily="Liberation Serif" fontSize="33" fill="#fff">?</text>
      </I>
    </Cell>
    <Cell w="w-[49px]"><Handle /></Cell>
  </div>
);

/* ------------------------------------------------------------------ */
/* Panel icons                                                         */
/* ------------------------------------------------------------------ */

const S = ({ children, dim = false }: Kids & { dim?: boolean }) => (
  <svg width="32" height="32" viewBox="0 0 32 32" className={dim ? "shrink-0 opacity-40 overflow-visible" : "shrink-0 overflow-visible"}>
    {children}
  </svg>
);

const Funnel = () => (
  <S>
    <path d="M3 6h26L19 17v14l-5-3V17z" fill="#6d97c4" stroke="#2e5a8c" strokeWidth="1.4" />
    <rect x="3" y="1.5" width="26" height="4.5" fill="#fce13a" stroke="#5a5a4a" strokeWidth="1" />
  </S>
);

const TreeArrow = ({ down = false }: { down?: boolean }) => (
  <S>
    <path d="M2 4h26" stroke="#8a8a86" strokeWidth="1.6" />
    <path d="M4 4v24M4 12h6M4 24.5h6" stroke="#bbb" strokeWidth="1.8" fill="none" />
    <rect x="9.5" y="9.5" width="5" height="5" fill="#fcd944" stroke="#f58a07" strokeWidth="2" />
    <rect x="9.5" y="22" width="5" height="5" fill="#fcd944" stroke="#f58a07" strokeWidth="2" />
    {down ? (
      <path d="M17 2h7v15h6L20.5 28 12 17h5z" fill="#6d97c4" stroke="#2e5a8c" strokeWidth="1.4" />
    ) : (
      <path d="M17.5 28h7V12h5.5L21 1l-9 11h5.500z" fill="#6d97c4" stroke="#2e5a8c" strokeWidth="1.4" />
    )}
  </S>
);

const SmallWrench = () => (
  <svg width="34" height="34" viewBox="0 0 40 42" className="shrink-0">
    <Wrench />
  </svg>
);

const Close = () => (
  <svg width="22" height="22" viewBox="0 0 22 22" className="shrink-0">
    <rect x="1.5" y="1.5" width="19" height="19" rx="4.5" fill="#6a6a6a" stroke="#333" strokeWidth="1.8" />
    <path d="M5.5 5.5l11 11M16.5 5.5l-11 11" stroke="#333" strokeWidth="3.4" />
  </svg>
);

const Down = ({ s = 11 }: { s?: number }) => (
  <svg width={s} height={s} viewBox="0 0 11 11" className="shrink-0">
    <path d="M0 .5h11L6.5 10.5h-2z" fill="#6c6c6c" />
  </svg>
);
const Right = () => (
  <svg width="11" height="11" viewBox="0 0 11 11" className="shrink-0">
    <path d="M.5 0v11l10-4.500v-2z" fill="#6c6c6c" />
  </svg>
);

const Raster = ({ light = false }: { light?: boolean }) => {
  const a = light ? "#66717f" : "#2a3b50";
  const b = light ? "#bdd0e8" : "#a9c5e8";
  return (
    <svg width="26" height="26" viewBox="0 0 26 26" className="shrink-0" shapeRendering="crispEdges">
      <path d="M0 0h26v17h-9v9H0z" fill={b} />
      <path d="M0 0h9v9H0zM17 0h9v9h-9zM9 9h8v8H9zM0 17h9v9H0z" fill={a} />
    </svg>
  );
};

const TableIcon = () => (
  <svg width="28" height="32" viewBox="0 0 28 32" className="shrink-0">
    <rect x="1" y="1" width="26" height="30" rx="2" fill="#eee" stroke="#888a85" strokeWidth="1.8" />
    <path d="M1 9.5h26" stroke="#888a85" strokeWidth="1.6" />
    <path d="M5 5.5h5M14 5.5h9M5 15h5M14 15h9M5 21h5M14 21h9M5 27h5M14 27h9" stroke="#888a85" strokeWidth="1.6" />
  </svg>
);

const Zip = () => (
  <svg width="28" height="28" viewBox="0 0 28 28" className="shrink-0">
    <rect x="1" y="1" width="26" height="26" fill="#eee" stroke="#888a85" strokeWidth="1.8" />
    <rect x="8" y="1.5" width="8" height="25" fill="#888a85" />
    <path d="M10 2v10M14 3v9" stroke="#fff" strokeWidth="2" strokeDasharray="1.5 1.5" />
    <circle cx="12" cy="16" r="3" fill="#fff" stroke="#333" strokeWidth="1.5" />
    <rect x="9.5" y="19" width="5" height="8" rx="2.5" fill="#fff" stroke="#333" strokeWidth="1.5" />
  </svg>
);

const Poly = ({ gray = false }: { gray?: boolean }) => (
  <svg width="32" height="24" viewBox="0 0 32 24" className="shrink-0">
    <path
      d="M3.5 3C8 .5 13 5 17.5 5S26 .5 29.5 2.5C32 5 31 12 30 17.5c-2 4-7-1-12-1.500-6 0-8 6-13 7C0 22 1 16 1 12c0-3 0-7 2.500-9z"
      fill={gray ? "#e4e4e2" : "#d5e3f4"}
      stroke={gray ? "#8a8a86" : "#2c4257"}
      strokeWidth="1.8"
    />
  </svg>
);

const Folder = () => (
  <svg width="28" height="28" viewBox="0 0 28 28" className="shrink-0">
    <path d="M0 0h15l4 4h9v6H18l-4-4H0z" fill="#888a85" />
    <path d="M1 9h12l4 4h10v14H1z" fill="#eee" stroke="#888a85" strokeWidth="1.6" />
  </svg>
);

const Check = ({ on = false }: { on?: boolean }) => (
  <svg width="28" height="28" viewBox="0 0 28 28" className="shrink-0">
    <rect x="1" y="1" width="26" height="26" rx="6" fill={on ? "#b1b1b1" : "none"} stroke="#333" strokeWidth="1.7" />
    <path d="M5 15.5l5.5 6L23 5" fill="none" stroke="#333" strokeWidth="3.2" />
  </svg>
);

const Clock = () => (
  <svg width="30" height="30" viewBox="0 0 30 30" className="shrink-0">
    <circle cx="15" cy="15" r="13.5" fill="#f2f4f3" stroke="#888a85" strokeWidth="1.5" />
    <path d="M15 5v11l6 4.5" fill="none" stroke="#2e3436" strokeWidth="1.5" />
  </svg>
);

const QLogo = () => (
  <svg width="30" height="30" viewBox="0 0 30 30" className="shrink-0">
    <path fillRule="evenodd" d="M14.5 1.5a13 13 0 100 26c1.500 0 3-.3 4.200-.8L14 21.500a7.500 7.500 0 117.500-6.500l5 4.500A13 13 0 0014.500 1.500z" fill="#76a312" />
    <path d="M19 15h3l7 8v5.5h-4L17 20z" fill="#589632" />
    <path d="M12 11h6l3 4-4 4-5-5z" fill="#ee7913" /><path d="M17 15l3-1 3 3-3 3z" fill="#fcd944" />
  </svg>
);

const TEETH = [0, 45, 90, 135, 180, 225, 270, 315];
const Gear = ({ size = 30, fill = "#a4c2ea", stroke = "#3f7dcb" }: { size?: number; fill?: string; stroke?: string }) => (
  <svg width={size} height={size} viewBox="0 0 30 30" className="shrink-0">
    <g fill={fill} stroke={stroke} strokeWidth="1.5">
      {TEETH.map((a) => (
        <rect key={a} x="12.8" y="1" width="4.4" height="8" rx="1.8" transform={`rotate(${a} 15 15)`} />
      ))}
      <circle cx="15" cy="15" r="8" />
    </g>
    {TEETH.map((a) => (
      <rect key={a} x="13.5" y="4" width="3" height="5" fill={fill} transform={`rotate(${a} 15 15)`} />
    ))}
    <circle cx="15" cy="15" r="3.2" fill="#b1b1b1" stroke={stroke} strokeWidth="1.5" />
  </svg>
);

const ZonalIcon = () => (
  <svg width="30" height="30" viewBox="0 0 30 30" className="shrink-0">
    <path d="M2 1h16v10h-5v6H2z" fill="#a8bccb" />
    <path d="M2 1h6v5H2zM13 1h5v5h-5zM8 6h5v5H8zM2 11h11v6H2z" fill="#6f8594" />
    <path d="M29 17v-3H17l5 7-5 7h12v-3" fill="none" stroke="#d65fb0" strokeWidth="1.6" />
  </svg>
);

const Grass = () => (
  <svg width="30" height="30" viewBox="0 0 30 30" className="shrink-0">
    <path d="M15 1L27 14 15 28 3 14z" fill="none" stroke="#222" strokeWidth="1.2" />
    <path d="M4 17l11 12 11-12M5 20l10 10 10-10M4 28h8M18 28h8" fill="none" stroke="#000" strokeWidth="1.2" />
    <path d="M15 25C14.5 17 14.5 10 15.5 5c.8 6 .8 12-.5 20zM15 25c-2-6-4-9-6.500-11.500 3.500 2 6 6 6.500 11.500zM15 25c0-6 3-12 6-13.500-2.500 3.500-4 8.500-6 13.500zM14.500 24c-1-6-1-9-2.500-13 2 4 3 8 2.500 13z" fill="#12a012" stroke="#0c9a0c" strokeWidth=".8" />
  </svg>
);

const Saga = () => (
  <svg width="32" height="32" viewBox="0 0 32 32" className="shrink-0">
    <circle cx="16" cy="16" r="15" fill="#c5d7ec" opacity=".7" />
    <path d="M24 6A13 13 0 1028.500 18" fill="none" stroke="#0b4f96" strokeWidth="3" />
    <path d="M18 3l8.500-1V9.500l-4-3z" fill="#0b4f96" />
    <path d="M15.500 8L6 16.500 21 28M15.500 8l10 13M12 18h17.500" fill="none" stroke="#0b4f96" strokeWidth="2.400" />
  </svg>
);

const Mag = () => (
  <svg width="26" height="26" viewBox="0 0 26 26" className="shrink-0">
    <circle cx="10.5" cy="10.5" r="8.7" fill="none" stroke="#8c8c8c" strokeWidth="1.9" />
    <path d="M17 17l7.5 7" stroke="#8c8c8c" strokeWidth="2.6" />
  </svg>
);

/* ------------------------------------------------------------------ */
/* Panels                                                              */
/* ------------------------------------------------------------------ */

const TitleBar = ({ title, height }: { title: string; height: string }) => (
  <div className={`flex items-center pr-[4px] ${height}`}>
    <div className="flex-1 pr-[24px] text-center text-[22px] leading-none text-[#111]">{title}</div>
    <div className="pb-[3px]"><Close /></div>
  </div>
);

const treeText = "text-[26px] leading-none whitespace-nowrap text-[#0d0d0d]";

const BrowserRow = ({ indent, arrow, icon, label, selected = false }: { indent: string; arrow?: React.ReactNode; icon: React.ReactNode; label: string; selected?: boolean }) => (
  <div className={`flex h-[36px] shrink-0 items-center ${indent} ${selected ? "bg-[#efefef]" : ""}`}>
    <div className="flex w-[26px] shrink-0 items-center">{arrow}</div>
    <div className="flex w-[50px] shrink-0 items-center justify-center pr-[6px]">{icon}</div>
    <div className={`${treeText} tracking-[-0.012em]`}>{label}</div>
  </div>
);

const VBar = ({ children }: Kids) => <div className="w-[16px] shrink-0 bg-[#333] px-[2px]">{children}</div>;

const HBar = ({ thumb }: { thumb: string }) => (
  <div className="flex h-[16px] shrink-0">
    <div className="flex-1 bg-[#333] p-[2px]"><div className={`h-[12px] bg-[#707070] ${thumb}`} /></div>
    <div className="h-[16px] w-[16px] border-2 border-[#9a9a9a] bg-[#b1b1b1]" />
  </div>
);

const Browser = () => (
  <div className="flex h-[456px] flex-col">
    <TitleBar title="Browser" height="h-[40px] pb-[4px]" />
    <div className="flex h-[59px] items-center pb-[7px]">
      <Cell w="w-[28px]">
        <S>
          <rect x="3" y="3" width="23" height="23" fill="#eee" stroke="#a5a59f" strokeWidth="1.5" />
          <rect x="20" y="20" width="11" height="11" rx="2" fill="#4f9152" /><path d="M25.5 22v7M22 25.5h7" stroke="#fff" strokeWidth="2" />
        </S>
      </Cell>
      <Cell w="w-[53px]"><Refresh size={31} /></Cell>
      <Cell w="w-[52px]"><Funnel /></Cell>
      <Cell w="w-[53px]"><TreeArrow /></Cell>
      <Cell w="w-[51px]">
        <S>
          <circle cx="16" cy="16" r="12.5" fill="#6d97c4" stroke="#3d6fae" strokeWidth="1.4" />
          <text x="16" y="24" textAnchor="middle" fontFamily="Liberation Serif" fontStyle="italic" fontWeight="700" fontSize="24" fill="#fff">i</text>
        </S>
      </Cell>
    </div>
    <div className="flex h-[357px] w-[445px] flex-col rounded-[4px] border-2 border-[#333] bg-[#b1b1b1] px-[1px] pt-[1px]">
      <div className="flex h-[334px] min-w-0">
        <div className="flex w-[422px] flex-col overflow-hidden">
          <BrowserRow indent="pl-[134px]" icon={<TableIcon />} label="non_residential_bu" />
          <BrowserRow indent="pl-[134px]" icon={<TableIcon />} label="residential_burgla" />
          <BrowserRow indent="pl-[134px]" arrow={<Down />} icon={<Zip />} label="station_boundarie" />
          <BrowserRow indent="pl-[174px]" icon={<Poly />} label="Police_bounds" />
          <BrowserRow indent="pl-[134px]" arrow={<Down />} icon={<Zip />} label="worldpop_south_a" />
          <BrowserRow indent="pl-[174px]" icon={<Raster light />} label="ZAF15v4.tif" selected />
          <BrowserRow indent="pl-[174px]" icon={<Raster />} label="ZAF15v4.tif.ov" />
          <BrowserRow indent="pl-[94px]" arrow={<Right />} icon={<Folder />} label="South_Africa_100m_P" />
          <BrowserRow indent="pl-[94px]" icon={<Raster />} label="after.png" />
          <BrowserRow indent="pl-[94px]" icon={<Raster />} label="before.png" />
        </div>
        <VBar><div className="mt-[56px] h-[48px] bg-[#707070]" /></VBar>
      </div>
      <HBar thumb="w-[258px]" />
    </div>
  </div>
);

const Legend = ({ color, label, border }: { color: string; label: string; border: string }) => (
  <div className="flex h-[48px] shrink-0 items-center pl-[86px]">
    <Check />
    <div className={`ml-[12px] h-[36px] w-[36px] shrink-0 border-2 ${color} ${border}`} />
    <div className={`ml-[12px] ${treeText}`}>{label}</div>
  </div>
);

const Layers = () => (
  <div className="flex h-[521px] flex-col pt-[11px]">
    <TitleBar title="Layers" height="h-[38px] pb-[2px]" />
    <div className="flex h-[62px] items-center pb-[4px]">
      <Cell w="w-[29px]">
        <S>
          <path d="M2 8l16-4v6L2 14z" fill="#fce13a" /><path d="M2 14l13-3v7L2 20z" fill="#6d97c4" /><path d="M2 20l13-3v5L4 28z" fill="#e33" />
          <path d="M30 3L20 13" stroke="#c98a1e" strokeWidth="3.5" />
          <path d="M14 11l10 8-6 9c-4 0-8-2-9-6z" fill="#e5b45f" stroke="#9c6a12" strokeWidth="1.2" />
        </S>
      </Cell>
      <Cell w="w-[53px]">
        <S>
          <path d="M2 14v14h14" fill="none" stroke="#999" strokeWidth="1.6" /><path d="M7 9v14h14V9z" fill="#eee" stroke="#999" /><path d="M11 5h14v14H11z" fill="#eee" stroke="#999" />
          <path d="M15 16V5c0-5 5-5 5 0v12c0 3-3 3-3 0V8" fill="none" stroke="#35618f" strokeWidth="1.7" />
          <rect x="19" y="20" width="11" height="11" rx="2" fill="#4f9152" /><path d="M24.5 22v7M21 25.5h7" stroke="#fff" strokeWidth="2" />
        </S>
      </Cell>
      <Cell w="w-[52px]">
        <S>
          <path d="M1 18C6 8 24 8 29 18c-6 10-22 10-28 0z" fill="#f2f2f0" stroke="#444" strokeWidth="1.2" />
          <path d="M1 10C8 4 20 4 28 11" stroke="#8e8e88" strokeWidth="1.6" fill="none" />
          <circle cx="15" cy="16" r="7" fill="#6d97c4" stroke="#25466f" /><circle cx="15" cy="15" r="3.3" fill="#0a0a0a" />
          <path d="M18 23h15l-7.500 7z" fill="#3a3a3a" />
        </S>
      </Cell>
      <Cell w="w-[51px]"><Funnel /></Cell>
      <Cell w="w-[53px]">
        <S dim>
          <text x="1" y="19" fontFamily="Liberation Serif" fontStyle="italic" fontSize="36" fill="#999">ε</text>
          <path d="M16 18h14v3l-5 5v6h-4v-6l-5-5z" fill="#ccc" />
        </S>
      </Cell>
      <Cell w="w-[36px]"><Drop /></Cell>
      <Cell w="w-[40px]"><TreeArrow down /></Cell>
      <Cell w="w-[52px]"><TreeArrow /></Cell>
      <Cell w="w-[62px]"><Chev /></Cell>
    </div>
    <div className="flex h-[410px] w-[445px] flex-col rounded-[4px] border-2 border-[#333] bg-[#b1b1b1] px-[1px] pt-[1px]">
      <div className="flex h-[388px] min-w-0">
        <div className="flex w-[422px] flex-col overflow-hidden">
          <div className="flex h-[44px] shrink-0 items-center bg-[#efefef] pl-[14px]">
            <Down />
            <div className="ml-[21px]"><Check on /></div>
            <div className="ml-[16px]"><Raster light /></div>
            <div className={`ml-[14px] border-b border-black pb-[1px] font-bold tracking-[0.005em] ${treeText}`}>ZAF15v4</div>
            <div className="mr-[2px] ml-auto h-[32px] w-[6px] bg-[#8a8a8a]" />
          </div>
          <div className="flex h-[44px] shrink-0 items-center pl-[86px]">
            <div className="h-[32px] w-[32px] bg-black" />
            <div className={`ml-[12px] ${treeText}`}>0</div>
          </div>
          <div className="flex h-[44px] shrink-0 items-center pl-[86px]">
            <div className="h-[32px] w-[32px] bg-white" />
            <div className={`ml-[12px] ${treeText}`}>70.8241</div>
          </div>
          <div className="relative flex h-[44px] shrink-0 items-center pl-[14px]">
            <Down />
            <div className="ml-[21px]"><Check /></div>
            <div className="ml-[12px]"><Poly gray /></div>
            <div className={`ml-[12px] font-bold tracking-[-0.005em] ${treeText}`}>gauteng_buglaries_201</div>
            <div className="absolute top-[6px] right-[2px] h-[32px] w-[6px] bg-[#8a8a8a]" />
          </div>
          <Legend color="bg-[#f7fbff]" border="border-[#a3a8ac]" label="8 - 282" />
          <Legend color="bg-[#c8dcf0]" border="border-[#8795a3]" label="282 - 433" />
          <Legend color="bg-[#73b3d8]" border="border-[#4f7a93]" label="433 - 606" />
          <Legend color="bg-[#2979b9]" border="border-[#1f547f]" label="606 - 922" />
          <Legend color="bg-[#08306b]" border="border-[#0a2349]" label="922 - 2082" />
        </div>
        <VBar><div className="mt-[2px] h-[294px] bg-[#707070]" /></VBar>
      </div>
      <HBar thumb="w-[388px]" />
    </div>
  </div>
);

const ToolRow = ({ indent, h = "h-[36px]", arrow, icon, label, selected = false }: { indent: string; h?: string; arrow?: React.ReactNode; icon?: React.ReactNode; label: string; selected?: boolean }) => (
  <div className={`flex shrink-0 items-center ${h} ${indent} ${selected ? "bg-[#efefef]" : ""}`}>
    <div className="flex w-[31px] shrink-0 items-center">{arrow}</div>
    {icon && <div className="flex w-[45px] shrink-0 items-center justify-center pr-[11px]">{icon}</div>}
    <div className={`${treeText} tracking-[-0.008em]`}>{label}</div>
  </div>
);

const Toolbox = () => (
  <div className="flex w-[703px] flex-col">
    <TitleBar title="Processing Toolbox" height="h-[40px] pb-[4px]" />
    <div className="flex h-[58px] items-center pb-[7px]">
      <Cell w="w-[30px]">
        <div className="relative h-[34px] w-[34px] shrink-0">
          <div className="absolute top-[-1px] left-0"><Gear size={21} fill="#d01010" stroke="#a00" /></div>
          <div className="absolute top-[9px] left-[18px] opacity-50"><Gear size={15} fill="#777" stroke="#444" /></div>
          <div className="absolute top-[20px] left-[9px]"><Gear size={13} /></div>
          <svg width="16" height="9" className="absolute top-[22px] left-[19px]"><path d="M0 0h15L7.5 8z" fill="#222" /></svg>
        </div>
      </Cell>
      <Cell w="w-[53px]">
        <S>
          <path d="M15 2c-6 0-7 2-7 5v3h8v1H5c-3 0-4 3-4 6s1 6 4 6h3v-4c0-3 2-5 5-5h7c2 0 4-2 4-4V7c0-3-3-5-9-5z" fill="#3573a8" />
          <path d="M17 31c6 0 7-2 7-5v-3h-8v-1h11c3 0 4-3 4-6s-1-6-4-6h-2v4c0 3-2 5-5 5h-7c-2 0-4 2-4 4v3c0 3 2 5 8 5z" fill="#fdd03b" />
          <circle cx="11.5" cy="6" r="1.4" fill="#ddd" />
          <path d="M18 23h15l-7.500 8z" fill="#222" />
        </S>
      </Cell>
      <Cell w="w-[50px]"><Clock /></Cell>
      <Cell w="w-[52px]">
        <S>
          <path d="M6 2h14l7 7v21H6z" fill="#fff" stroke="#555" />
          <path d="M9 10h7M9 15h14M9 19h10M9 23h14M9 27h9" stroke="#333" strokeWidth="1.7" /><path d="M19 2v8h8" fill="#ddd" stroke="#555" />
        </S>
      </Cell>
      <Cell w="w-[31px]"><Sep /></Cell>
      <Cell w="w-[30px]">
        <S dim>
          <rect x="3" y="4" width="17" height="17" fill="#aba277" stroke="#8b8054" /><path d="M15 28L27 8l4 2-13 19-3 2z" fill="#999" stroke="#555" />
        </S>
      </Cell>
      <Cell w="w-[30px]"><Sep /></Cell>
      <Cell w="w-[29px]"><SmallWrench /></Cell>
    </div>
    <div className="flex h-[48px] items-center rounded-[6px] border-2 border-[#333] bg-[#b1b1b1] pr-[14px] pl-[14px]">
      <Mag />
      <div className="ml-[19px] flex-1 text-[26px] leading-none tracking-[-0.01em] text-[#0d0d0d]">zona</div>
      <svg width="26" height="20" viewBox="0 0 26 20">
        <path d="M7 0h19v20H7L0 10z" fill="#8c8c8c" />
        <path d="M10 4l11 12M21 4L10 16" stroke="#fff" strokeWidth="2" />
      </svg>
    </div>
    <div className="relative flex h-[831px] flex-col border-2 border-[#333] bg-[#b1b1b1] pt-[2px] pr-[4px] pl-[1px]">
      <ToolRow indent="pl-[14px]" arrow={<Right />} icon={<Clock />} label="Recently used" />
      <ToolRow indent="pl-[14px]" arrow={<Down />} icon={<QLogo />} label="Raster analysis" />
      <ToolRow indent="pl-[54px]" icon={<Gear />} label="Raster layer zonal statistics" />
      <ToolRow indent="pl-[54px]" icon={<Gear />} label="Zonal histogram" />
      <ToolRow indent="pl-[54px]" icon={<ZonalIcon />} label="Zonal statistics" selected />
      <ToolRow indent="pl-[14px]" arrow={<Down />} icon={<Grass />} label="GRASS" />
      <ToolRow indent="pl-[55px]" h="h-[32px]" arrow={<Down s={10} />} label="Raster (r.*)" />
      <ToolRow indent="pl-[94px]" icon={<Grass />} label="r.stats.zonal" />
      <ToolRow indent="pl-[14px]" arrow={<Down />} icon={<Saga />} label="SAGA" />
      <ToolRow indent="pl-[55px]" h="h-[32px]" arrow={<Down s={10} />} label="Geostatistics" />
      <ToolRow indent="pl-[94px]" icon={<Saga />} label="Zonal multiple regression analysis (point..." />
      <ToolRow indent="pl-[94px]" icon={<Saga />} label="Zonal raster statistics" />
      <div className="absolute top-[137px] left-[73px] h-[55px] w-[263px] rounded-[3px] border-[6px] border-[#ff3370]" />
    </div>
  </div>
);

/* ------------------------------------------------------------------ */
/* Status bar                                                          */
/* ------------------------------------------------------------------ */

const Spin = () => (
  <svg width="10" height="34" viewBox="0 0 10 34" className="shrink-0">
    <path d="M1 8L5 0l4 8zM1 26l4 8 4-8z" fill="#bdbdbd" />
  </svg>
);

const darkField = "flex shrink-0 items-center rounded-[6px] border-2 border-[#222] bg-gradient-to-b from-[#535353] to-[#393939] text-[23px] leading-none tracking-[-0.02em] text-[#b4b4b4]";

const Status = () => (
  <div className="flex h-[61px] items-center">
    <div className="ml-[8px] flex h-[47px] w-[434px] shrink-0 items-center rounded-[6px] border-2 border-[#333] bg-[#b1b1b1] pl-[15px]">
      <Mag />
      <div className="ml-[19px] text-[25px] leading-none tracking-[0.01em] text-[#636363]">Type to locate (⌘K)</div>
    </div>
    <div className="ml-[59px] flex h-[30px] w-[9px] shrink-0 items-center justify-end overflow-hidden text-[22px] leading-none">d</div>
    <div className="ml-[6px] flex h-[42px] w-[197px] shrink-0 items-center justify-center rounded-[5px] border-2 border-[#333] bg-[#b1b1b1] pr-[4px] text-[22px] leading-none font-medium text-[#111]">27.799,-25.231</div>
    <svg width="34" height="36" viewBox="0 0 34 36" className="ml-[7px] shrink-0">
      <circle cx="21" cy="24" r="11" fill="#a99a9a" />
      <path d="M5 8c0-5 6-7 10-4l9 12-12 8z" fill="#fff" stroke="#000" strokeWidth="2.4" />
      <path d="M9 6l4 9M14 5l3 9" stroke="#000" strokeWidth="3" fill="none" />
      <path d="M8 19c5-4 11-5 16-2" stroke="#000" strokeWidth="3" fill="none" />
      <circle cx="18" cy="24" r="8.5" fill="#fff" stroke="#000" strokeWidth="2.4" />
      <circle cx="18" cy="24" r="2.6" fill="#fff" stroke="#000" strokeWidth="2" />
      <path d="M22 8h2M26 6h2M29 4h2M2 20h2M1 24h2" stroke="#000" strokeWidth="2" />
    </svg>
    <div className="ml-[28px] flex h-[30px] w-[9px] shrink-0 items-center justify-end overflow-hidden text-[22px] leading-none">a</div>
    <div className={`ml-[5px] h-[48px] w-[206px] justify-between pr-[9px] pl-[10px] ${darkField}`}>
      <span>1:2445468</span>
      <Drop />
    </div>
    <svg width="26" height="30" viewBox="0 0 26 30" className="ml-[23px] shrink-0">
      <path d="M6 15V9c0-9 13-9 13 0v6" fill="none" stroke="#dadad6" strokeWidth="3" />
      <rect x="1" y="14" width="24" height="16" rx="2" fill="#5f5f5f" />
    </svg>
    <div className="ml-[20px] w-[8px] shrink-0 text-[22px] leading-none">r</div>
    <div className={`ml-[5px] h-[50px] w-[192px] justify-between pr-[9px] pl-[8px] ${darkField}`}>
      <span>100%</span>
      <Spin />
    </div>
    <div className="ml-[17px] flex h-[30px] w-[8px] shrink-0 items-center justify-end overflow-hidden text-[22px] leading-none">a</div>
    <div className={`ml-[19px] h-[48px] w-[184px] justify-between pr-[9px] pl-[8px] ${darkField}`}>
      <span>0.0 °</span>
      <Spin />
    </div>
    <div className="ml-[13px]">
      <svg width="27" height="27" viewBox="0 0 28 28">
        <rect x="1" y="1" width="26" height="26" rx="6" fill="#b1b1b1" stroke="#333" strokeWidth="1.8" />
        <path d="M5 15.5l5.5 6L23 5" fill="none" stroke="#333" strokeWidth="3.2" />
      </svg>
    </div>
    <div className="ml-[14px] w-[76px] shrink-0 text-[23px] leading-none tracking-[-0.02em]">Render</div>
    <svg width="26" height="28" viewBox="0 0 26 28" className="ml-[28px] shrink-0">
      <g fill="none" stroke="#c9c9c9" strokeWidth="1.9">
        <circle cx="13" cy="13" r="11.5" /><ellipse cx="13" cy="13" rx="5.5" ry="11.5" /><path d="M2 9h22M1 14h24M3 19h20M13 1v25" />
      </g>
    </svg>
    <div className="ml-[6px] w-[122px] shrink-0 text-[23px] leading-none tracking-[-0.028em]">EPSG:4326</div>
    <svg width="32" height="32" viewBox="0 0 32 32" className="ml-[44px] shrink-0">
      <path d="M16 1a14 14 0 1010 24l4 6-1-9A14 14 0 0016 1z" fill="#636363" />
      <g fill="#eee"><circle cx="8.500" cy="14" r="2.6" /><circle cx="16" cy="14" r="2.6" /><circle cx="23.500" cy="14" r="2.6" /></g>
    </svg>
  </div>
);

/* ------------------------------------------------------------------ */

const MENU: [string, string][] = [
  ["QGIS", "w-[106px] font-bold tracking-[0.025em]"],
  ["Project", "w-[128px]"],
  ["Edit", "w-[86px]"],
  ["View", "w-[101px]"],
  ["Layer", "w-[107px]"],
  ["Settings", "w-[144px]"],
  ["Plugins", "w-[132px]"],
  ["Vector", "w-[122px]"],
  ["Raster", "w-[120px]"],
  ["Database", "w-[160px]"],
  ["Web", "w-[96px]"],
  ["Mesh", "w-[108px]"],
  ["Processing", "w-[180px]"],
  ["Window", "w-[140px]"],
  ["Help", "w-[80px]"],
];

export default function App() {
  return (
    <div className="flex h-[1360px] w-[1938px] flex-col overflow-hidden bg-gradient-to-b from-[#b9bab9] via-[#999b9a] to-[#707170] font-['Inter','Noto_Sans',sans-serif]">
      <div className="flex h-[45px] shrink-0 items-center bg-[#545454] pl-[22px] text-[27px] leading-none font-medium tracking-[-0.008em] text-white">
        {MENU.map(([label, cls]) => (
          <div key={label} className={`shrink-0 whitespace-nowrap ${cls}`}>{label}</div>
        ))}
      </div>
      <div className="h-[6px] shrink-0 bg-gradient-to-b from-[#8a8a8a] to-[#c6c7c6]" />
      <div className="ml-[5px] flex h-[1289px] w-[1927px] shrink-0 flex-col overflow-hidden rounded-[10px] border border-black bg-[#707070] shadow-[0_12px_40px_rgba(0,0,0,0.5)]">
        <div className="relative flex h-[46px] shrink-0 items-center justify-center border-t-2 border-b border-[#888] border-b-[#707070] bg-gradient-to-b from-[#585858] to-[#505050] pr-[2px] pb-[2px]">
          <div className="absolute left-[16px] flex gap-[16px]">
            <div className="h-[24px] w-[24px] rounded-full bg-[#ff5b52]" />
            <div className="h-[24px] w-[24px] rounded-full bg-[#e6c029]" />
            <div className="h-[24px] w-[24px] rounded-full bg-[#53c22b]" />
          </div>
          <div className="text-[26px] leading-none tracking-[-0.01em] text-[#c3c3c3]">*crime - QGIS</div>
        </div>
        <div className="flex h-[48px] shrink-0 items-center justify-center border-b-2 border-black bg-gradient-to-b from-[#515151] to-[#474747] pr-[2px] text-[22px] leading-none font-medium text-white">*crime - QGIS</div>
        <div className="h-[156px] shrink-0">
          <Row1 />
          <Row2 />
        </div>
        <div className="flex h-[977px] shrink-0">
          <div className="flex w-[445px] shrink-0 flex-col pl-[1px]">
            <Browser />
            <Layers />
          </div>
          <div className="mt-[1px] ml-[14px] h-[976px] w-[746px] shrink-0 border border-[#555]"><MapCanvas /></div>
          <div className="ml-[13px]"><Toolbox /></div>
        </div>
        <Status />
      </div>
    </div>
  );
}
